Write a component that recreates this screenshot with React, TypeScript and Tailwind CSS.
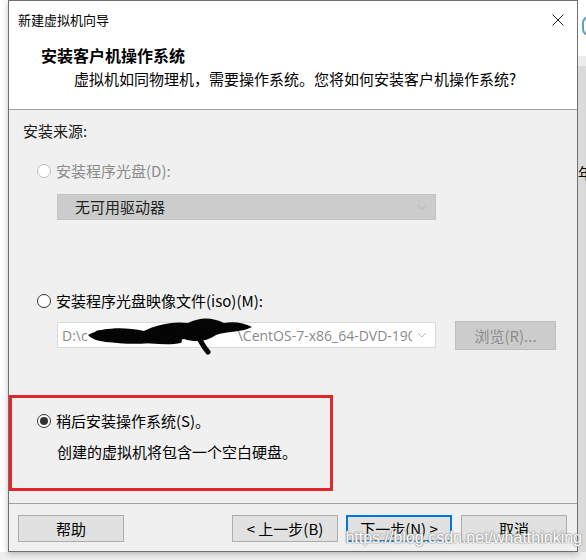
import React from 'react';

const font = "font-['Microsoft_YaHei','Noto_Sans_CJK_SC',sans-serif]";

function Radio({ checked, disabled }: { checked?: boolean; disabled?: boolean }) {
  return (
    <span
      className={`w-[14px] h-[14px] rounded-full border flex items-center justify-center bg-white shrink-0 ${
        disabled ? 'border-[#bcbcbc]' : 'border-[#333333]'
      }`}
    >
      {checked && <span className="w-[8px] h-[8px] rounded-full bg-[#333333]" />}
    </span>
  );
}

function Chevron() {
  return (
    <svg width="10" height="6" viewBox="0 0 10 6" className="shrink-0">
      <path d="M1 1 L5 5 L9 1" fill="none" stroke="#b8b8b8" strokeWidth="1" />
    </svg>
  );
}

function Button({ label, focused }: { label: string; focused?: boolean }) {
  return (
    <div
      className={`h-[27px] w-[106px] flex items-center justify-center text-[15px] text-black bg-[#e1e1e1] ${
        focused ? 'border-2 border-[#0078d7]' : 'border border-[#adadad]'
      }`}
    >
      {label}
    </div>
  );
}

export default function App() {
  return (
    <div className={`w-[586px] h-[560px] bg-[#f0f0f0] flex overflow-hidden relative ${font}`}>
      <div className="w-[8px] h-[552px] bg-white shrink-0" />

      {/* wizard window */}
      <div className="w-[570px] h-[552px] border border-[#6f6f6f] flex flex-col shrink-0 bg-[#f0f0f0] shadow-[0_2px_6px_rgba(0,0,0,0.25)]">
        <div className="h-[38px] bg-white flex items-center justify-between pl-[9px] pr-[13px]">
          <span className="text-[13px] text-black">新建虚拟机向导</span>
          <svg width="12" height="12" viewBox="0 0 12 12">
            <path d="M0.5 0.5 L11.5 11.5 M11.5 0.5 L0.5 11.5" stroke="#222" strokeWidth="1" />
          </svg>
        </div>

        <div className="h-[71px] bg-white pt-[5px]">
          <div className="pl-[32px] text-[16px] font-bold text-black leading-[22px]">安装客户机操作系统</div>
          <div className="pl-[65px] text-[15px] text-black leading-[22px] mt-[2px]">
            虚拟机如同物理机，需要操作系统。您将如何安装客户机操作系统?
          </div>
        </div>
        <div className="h-px bg-[#a0a0a0]" />

        <div className="flex-1 flex flex-col">
          <div className="pl-[14px] pt-[11px] text-[15px] leading-[20px] text-[#1a1a1a]">安装来源:</div>

          <div className="flex items-center gap-[5px] pl-[28px] mt-[20px] h-[20px] text-[15px] text-[#8c8c8c]">
            <Radio disabled />
            <span>安装程序光盘(D):</span>
          </div>
          <div className="ml-[48px] mt-[13px] w-[379px] h-[26px] bg-[#cccccc] border border-[#c4c4c4] flex items-center justify-between pl-[17px] pr-[8px]">
            <span className="text-[15px] text-[#222]">无可用驱动器</span>
            <Chevron />
          </div>

          <div className="flex items-center gap-[5px] pl-[28px] mt-[71px] h-[20px] text-[15px] text-black">
            <Radio />
            <span>安装程序光盘映像文件(iso)(M):</span>
          </div>
          <div className="flex items-start mt-[11px] pl-[48px] gap-[19px]">
            <div className="relative w-[379px] h-[26px] bg-white border border-[#d9d9d9] flex items-center justify-between pl-[4px] pr-[8px]">
              <div className="flex items-center text-[14px] text-[#8a8a8a] font-['Open_Sans',sans-serif] whitespace-nowrap overflow-hidden w-[350px]">
                <span>D:\c</span>
                <span className="w-[150px] shrink-0" />
                <span>\CentOS-7-x86_64-DVD-1908.iso</span>
              </div>
              <Chevron />
              <svg className="absolute left-[26px] top-[-8px]" width="170" height="40" viewBox="0 0 170 40">
                <path
                  d="M4 20 C20 12 40 12 60 16 C72 10 88 6 104 8 C116 2 128 2 140 8 C150 6 160 8 168 12 C156 18 142 16 132 20 C124 26 112 28 100 24 C88 28 76 26 64 28 C50 30 34 28 22 27 C14 26 8 24 4 20 Z"
                  fill="#050505"
                />
                <path d="M110 12 C114 22 118 30 124 37" stroke="#050505" strokeWidth="5" fill="none" strokeLinecap="round" />
                <path d="M14 18 C36 14 58 22 82 18 C96 16 106 20 120 14" stroke="#050505" strokeWidth="5" fill="none" strokeLinecap="round" />
                <path d="M40 26 C60 24 80 30 96 26" stroke="#050505" strokeWidth="4" fill="none" strokeLinecap="round" />
              </svg>
            </div>
            <div className="w-[101px] h-[29px] -mt-[1px] bg-[#cccccc] border border-[#bfbfbf] flex items-center justify-center text-[15px] text-[#8c8c8c]">
              浏览(R)...
            </div>
          </div>

          <div className="mt-[45px] w-[324px] h-[96px] border-[3px] border-[#e3262e] flex flex-col pl-[25px] pt-[13px]">
            <div className="flex items-center gap-[5px] h-[20px] text-[15px] text-black">
              <Radio checked />
              <span>稍后安装操作系统(S)。</span>
            </div>
            <div className="mt-[11px] pl-[20px] text-[15px] leading-[20px] text-black">创建的虚拟机将包含一个空白硬盘。</div>
          </div>
        </div>

        <div className="h-px bg-[#a0a0a0] mt-[12px]" />
        <div className="h-[47px] flex items-start pt-[11px] pl-[9px] pr-[10px]">
          <Button label="帮助" />
          <div className="flex-1" />
          <div className="flex gap-[8px]">
            <Button label="< 上一步(B)" />
            <Button label="下一步(N) >" focused />
          </div>
          <div className="ml-[9px]">
            <Button label="取消" />
          </div>
        </div>
      </div>

      {/* background beyond window */}
      <div className="flex-1 h-[552px] flex flex-col bg-[#dadada]">
        <div className="h-[56px] bg-white pt-[16px] pl-[4px]">
          <div className="w-[14px] h-[20px] rounded-full border-2 border-[#5aa1b4]" />
        </div>
        <div className="h-[10px] bg-[#ececec]" />
        <div className="mt-[97px] text-[15px] leading-[20px] text-black whitespace-nowrap">年</div>
      </div>

      <div className="absolute right-[4px] bottom-[10px] text-[16px] text-white font-['Liberation_Sans',sans-serif] [text-shadow:0_0_1px_#8a8a8a,0_0_2px_#a0a0a0,0_0_2px_#a0a0a0]">
        https://blog.csdn.net/whatthinking
      </div>
    </div>
  );
}
